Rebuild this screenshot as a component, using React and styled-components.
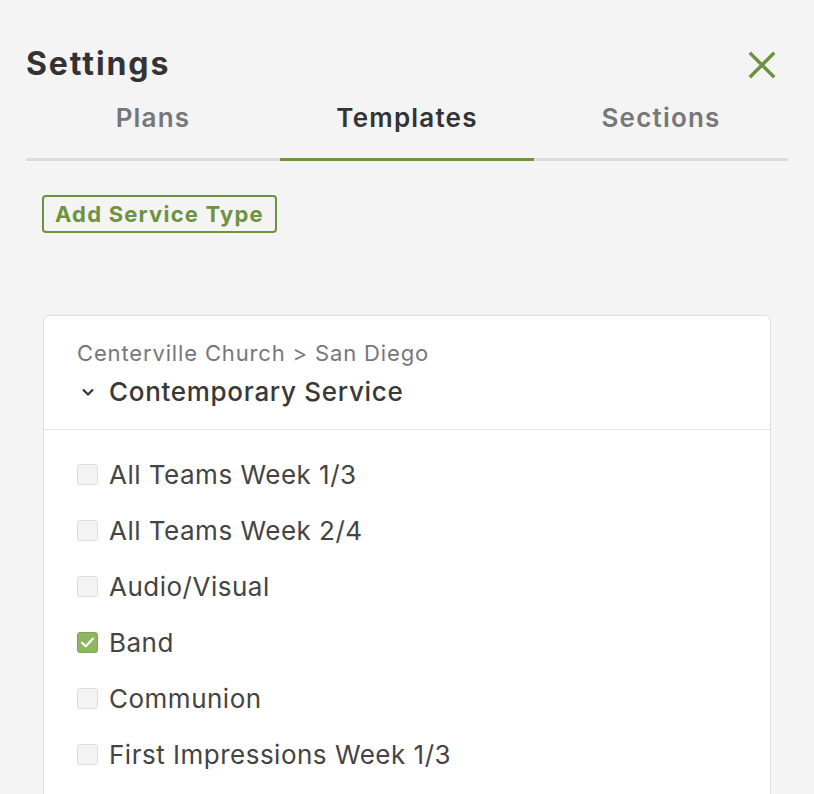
import React, { useState } from 'react';
import styled, { createGlobalStyle } from 'styled-components';

const GlobalStyle = createGlobalStyle`
  html, body {
    margin: 0;
    padding: 0;
    background: #f4f4f4;
    font-family: Inter, "Noto Sans", "Liberation Sans", sans-serif;
  }
`;

const green = '#6e9340';

const Page = styled.div`
  padding: 45px 26px 0 26px;
  height: 794px;
  box-sizing: border-box;
  overflow: hidden;
`;

const TitleRow = styled.div`
  display: flex;
  justify-content: space-between;
  align-items: center;
  height: 38px;
`;

const Title = styled.h1`
  margin: 0;
  font-size: 32px;
  line-height: 38px;
  font-weight: 700;
  color: #333;
  letter-spacing: 1.9px;
`;

const CloseButton = styled.button`
  background: transparent;
  border: none;
  padding: 0;
  margin-right: 12px;
  margin-top: 2px;
  width: 28px;
  height: 28px;
  display: flex;
  align-items: center;
  justify-content: center;
  cursor: pointer;
`;

const TabBar = styled.div`
  display: grid;
  grid-template-columns: repeat(3, 1fr);
`;

const Tab = styled.button`
  background: transparent;
  border: none;
  border-bottom: 3px solid ${p => (p.active ? green : '#dcdcdc')};
  padding: 20px 0 25px;
  font-family: inherit;
  font-size: 26px;
  line-height: 30px;
  font-weight: 600;
  letter-spacing: 1.2px;
  color: ${p => (p.active ? '#333' : '#777')};
  cursor: pointer;
`;

const AddButton = styled.button`
  margin: 34px 0 0 16px;
  height: 38px;
  padding: 0 11px;
  background: transparent;
  border: 2px solid ${green};
  border-radius: 4px;
  font-family: inherit;
  font-size: 22px;
  font-weight: 700;
  letter-spacing: 1.2px;
  color: ${green};
  cursor: pointer;
`;

const Card = styled.div`
  margin: 82px 17px 0 17px;
  background: #fff;
  border: 1px solid #dedede;
  border-radius: 6px;
`;

const CardHeader = styled.div`
  padding: 23px 33px 21px;
  border-bottom: 1px solid #e2e2e2;
`;

const Breadcrumb = styled.div`
  font-size: 22px;
  line-height: 28px;
  letter-spacing: 0.85px;
  color: #777;
`;

const ServiceTitle = styled.div`
  margin-top: 9px;
  display: flex;
  align-items: center;
  gap: 13px;
  font-size: 26px;
  line-height: 32px;
  font-weight: 500;
  letter-spacing: 0.7px;
  color: #383838;
`;

const List = styled.ul`
  list-style: none;
  margin: 0;
  padding: 16px 33px 40px;
`;

const Row = styled.li`
  height: 56px;
  display: flex;
  align-items: center;
  gap: 11px;
  font-size: 26px;
  letter-spacing: 0.5px;
  color: #444;
  cursor: pointer;
`;

const Box = styled.span`
  width: 21px;
  height: 21px;
  box-sizing: border-box;
  border-radius: 3px;
  border: 1px solid ${p => (p.checked ? '#7fa655' : '#dcdcdc')};
  background: ${p => (p.checked ? '#8db563' : '#f3f3f3')};
  display: flex;
  align-items: center;
  justify-content: center;
  flex-shrink: 0;
`;

const templates = [
  'All Teams Week 1/3',
  'All Teams Week 2/4',
  'Audio/Visual',
  'Band',
  'Communion',
  'First Impressions Week 1/3',
];

export default function App() {
  const [tab, setTab] = useState('Templates');
  const [checked, setChecked] = useState({ Band: true });

  const toggle = name => setChecked(c => ({ ...c, [name]: !c[name] }));

  return (
    <>
      <GlobalStyle />
      <Page>
        <TitleRow>
          <Title>Settings</Title>
          <CloseButton aria-label="Close">
            <svg width="28" height="28" viewBox="0 0 28 28">
              <path d="M3 3 L25 25 M25 3 L3 25" stroke={green} strokeWidth="3.4" strokeLinecap="square" />
            </svg>
          </CloseButton>
        </TitleRow>
        <TabBar>
          {['Plans', 'Templates', 'Sections'].map(t => (
            <Tab key={t} active={tab === t} onClick={() => setTab(t)}>
              {t}
            </Tab>
          ))}
        </TabBar>
        <AddButton>Add Service Type</AddButton>
        <Card>
          <CardHeader>
            <Breadcrumb>Centerville Church &gt; San Diego</Breadcrumb>
            <ServiceTitle>
              <svg width="16" height="10" viewBox="0 0 16 10" style={{ marginLeft: 3 }}>
                <path d="M3 2.5 L8 7.5 L13 2.5" fill="none" stroke="#333" strokeWidth="2.2" />
              </svg>
              Contemporary Service
            </ServiceTitle>
          </CardHeader>
          <List>
            {templates.map(name => (
              <Row key={name} onClick={() => toggle(name)}>
                <Box checked={!!checked[name]}>
                  {checked[name] && (
                    <svg width="19" height="19" viewBox="0 0 19 19">
                      <path d="M4 9.8 L7.8 13.3 L15 5.6" fill="none" stroke="#fff" strokeWidth="2.2" strokeLinecap="round" strokeLinejoin="round" />
                    </svg>
                  )}
                </Box>
                {name}
              </Row>
            ))}
          </List>
        </Card>
      </Page>
    </>
  );
}
